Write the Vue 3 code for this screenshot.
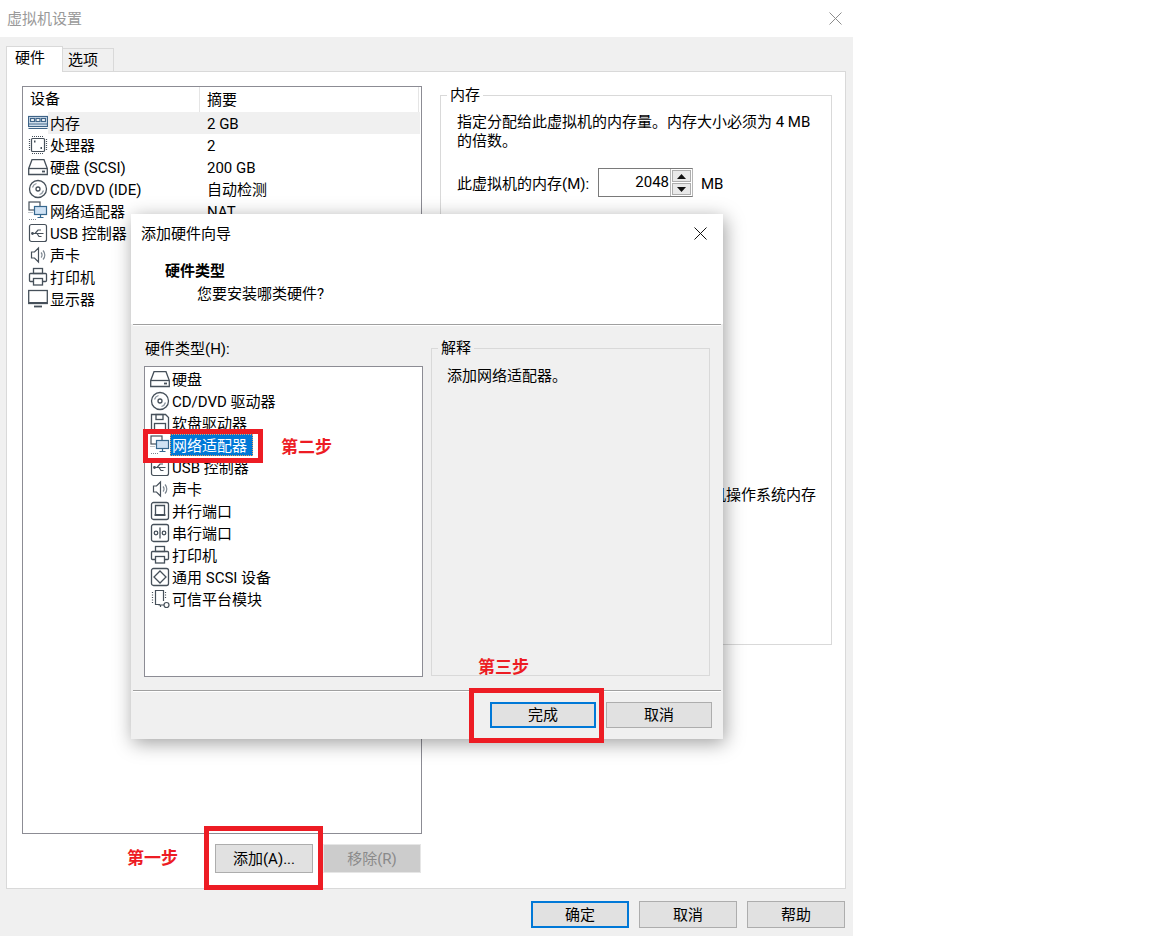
<script setup>
const devices = [
  { icon: 'i-mem', name: '内存', value: '2 GB', selected: true },
  { icon: 'i-cpu', name: '处理器', value: '2' },
  { icon: 'i-hdd', name: '硬盘 (SCSI)', value: '200 GB' },
  { icon: 'i-cd', name: 'CD/DVD (IDE)', value: '自动检测' },
  { icon: 'i-net', name: '网络适配器', value: 'NAT' },
  { icon: 'i-usb', name: 'USB 控制器', value: '' },
  { icon: 'i-snd', name: '声卡', value: '' },
  { icon: 'i-prn', name: '打印机', value: '' },
  { icon: 'i-mon', name: '显示器', value: '' }
]
const hardware = [
  { icon: 'i-hdd', name: '硬盘' },
  { icon: 'i-cd', name: 'CD/DVD 驱动器' },
  { icon: 'i-fdd', name: '软盘驱动器' },
  { icon: 'i-net', name: '网络适配器', selected: true },
  { icon: 'i-usb', name: 'USB 控制器' },
  { icon: 'i-snd', name: '声卡' },
  { icon: 'i-par', name: '并行端口' },
  { icon: 'i-ser', name: '串行端口' },
  { icon: 'i-prn', name: '打印机' },
  { icon: 'i-scsi', name: '通用 SCSI 设备' },
  { icon: 'i-tpm', name: '可信平台模块' }
]
</script>

<template>
  <div class="window">
    <svg class="defs" width="0" height="0" aria-hidden="true">
      <symbol id="i-mem" viewBox="0 0 20 20">
        <g fill="none" stroke="#3f6488" stroke-width="1.2">
          <rect x="0.5" y="3.5" width="19" height="10" fill="#dce8f4" />
          <rect x="2.5" y="5.5" width="4" height="3" fill="#fff" />
          <rect x="8" y="5.5" width="4" height="3" fill="#fff" />
          <rect x="13.5" y="5.5" width="4" height="3" fill="#fff" />
          <path d="M0.5 11H19.5M0.5 15.5H19.5" />
        </g>
      </symbol>
      <symbol id="i-cpu" viewBox="0 0 20 20">
        <g fill="none" stroke="#46505a" stroke-width="1.2">
          <rect x="3.5" y="3.5" width="13" height="13" rx="1" />
          <path stroke-dasharray="1 1" d="M4 1.5H16M4 18.5H16M1.5 4V16M18.5 4V16" />
          <path stroke-width="1.8" d="M6 6.5H7.5M12.5 13H14" />
        </g>
      </symbol>
      <symbol id="i-hdd" viewBox="0 0 20 20">
        <g fill="none" stroke="#46505a" stroke-width="1.3">
          <path d="M0.7 11.5L4 2.7H16L19.3 11.5V17.5H0.7Z" />
          <path d="M0.7 11.5H19.3" />
          <path stroke-width="1.8" d="M14 14.5H17" />
        </g>
      </symbol>
      <symbol id="i-cd" viewBox="0 0 20 20">
        <g fill="none" stroke="#46505a" stroke-width="1.3">
          <circle cx="10" cy="10" r="8.5" />
          <circle cx="10" cy="10" r="2" />
          <path stroke="#8d97a1" d="M4.5 8.5A6 6 0 0 1 8.5 4.5M15.5 11.5A6 6 0 0 1 11.5 15.5" />
        </g>
      </symbol>
      <symbol id="i-net" viewBox="0 0 20 20">
        <g fill="none" stroke="#46505a" stroke-width="1.2">
          <rect x="1" y="1" width="11" height="8" fill="#fff" />
          <rect x="6.5" y="5.5" width="12" height="8" fill="#cfe2f4" stroke="#36688f" />
          <path stroke="#36688f" d="M12.5 13.5V16M9.5 16.5H15.5" />
          <path stroke-dasharray="1 1" stroke="#7b858f" d="M0.5 11.5H5M1 18.5H9" />
        </g>
      </symbol>
      <symbol id="i-usb" viewBox="0 0 20 20">
        <g fill="none" stroke="#46505a" stroke-width="1.2">
          <rect x="1.5" y="1.5" width="17" height="17" rx="2" />
          <path d="M4.5 10.5H15.5M7 10.5L10 7H13M9 10.5L11 13.5H13.5" />
          <circle cx="4.5" cy="10.5" r="0.8" fill="#46505a" />
        </g>
      </symbol>
      <symbol id="i-snd" viewBox="0 0 20 20">
        <g fill="none" stroke="#46505a" stroke-width="1.2">
          <path d="M3.5 7H6.5L10.5 3V17L6.5 13H3.5Z" />
          <path stroke="#7b858f" d="M13 7.5A3.5 3.5 0 0 1 13 12.5M15 5.5A6.5 6.5 0 0 1 15 14.5" />
        </g>
      </symbol>
      <symbol id="i-prn" viewBox="0 0 20 20">
        <g fill="none" stroke="#46505a" stroke-width="1.3">
          <rect x="5.5" y="1.5" width="9" height="5" />
          <rect x="1.5" y="6.5" width="17" height="8" rx="1" />
          <rect x="5.5" y="11.5" width="9" height="6.5" fill="#fff" />
        </g>
      </symbol>
      <symbol id="i-mon" viewBox="0 0 20 20">
        <g fill="none" stroke="#46505a" stroke-width="1.3">
          <rect x="0.7" y="1.5" width="18.6" height="13" />
          <path stroke-width="2" d="M1 14H19" />
          <path stroke-width="1.8" d="M6 17.5H14" />
        </g>
      </symbol>
      <symbol id="i-fdd" viewBox="0 0 20 20">
        <g fill="none" stroke="#46505a" stroke-width="1.3">
          <path d="M1.5 1.5H15.5L18.5 4.5V18.5H1.5Z" />
          <rect x="6" y="1.5" width="7" height="5" />
          <rect x="4.5" y="10.5" width="11" height="8" />
        </g>
      </symbol>
      <symbol id="i-par" viewBox="0 0 20 20">
        <g fill="none" stroke="#46505a" stroke-width="1.3">
          <rect x="1.5" y="1.5" width="17" height="17" rx="2" />
          <path d="M5.5 13V4.5H14.5V13" />
          <path stroke-width="2" d="M4.5 14H15.5" />
        </g>
      </symbol>
      <symbol id="i-ser" viewBox="0 0 20 20">
        <g fill="none" stroke="#46505a" stroke-width="1.3">
          <rect x="1.5" y="1.5" width="17" height="17" rx="2" />
          <circle cx="6" cy="10" r="1.8" />
          <circle cx="14" cy="10" r="1.8" />
          <path d="M10 4.5V15.5" />
        </g>
      </symbol>
      <symbol id="i-scsi" viewBox="0 0 20 20">
        <g fill="none" stroke="#46505a" stroke-width="1.3">
          <rect x="1.5" y="1.5" width="17" height="17" rx="2" />
          <path d="M10 4L16 10L10 16L4 10Z" />
        </g>
      </symbol>
      <symbol id="i-tpm" viewBox="0 0 20 20">
        <g fill="none" stroke="#46505a" stroke-width="1.2">
          <path d="M13.5 12V1.5H5.5V15.5H10" />
          <path stroke-dasharray="1 1.5" d="M2.5 3V14M15.5 3V9" />
          <circle cx="16.5" cy="16" r="2.5" />
          <path d="M14 16H8.5M10.5 16V18" />
        </g>
      </symbol>
    </svg>

    <header class="titlebar">
      <span class="title">虚拟机设置</span>
      <svg class="close close-main" width="13" height="13" viewBox="0 0 13 13">
        <path d="M0.5 0.5L12.5 12.5M12.5 0.5L0.5 12.5" />
      </svg>
    </header>

    <div class="body">
      <div class="tabs">
        <div class="tab active">硬件</div>
        <div class="tab">选项</div>
      </div>

      <section class="panel">
        <div class="left">
          <div class="device-list">
            <div class="device-head">
              <span class="head-a">设备</span>
              <span class="head-b">摘要</span>
            </div>
            <div v-for="d in devices" :key="d.name" class="device-row">
              <svg class="ico"><use :href="'#' + d.icon" /></svg>
              <div class="device-cells" :class="{ sel: d.selected }">
                <span class="device-name">{{ d.name }}</span>
                <span>{{ d.value }}</span>
              </div>
            </div>
          </div>
          <div class="list-actions">
            <button class="btn btn-side">添加(A)...</button>
            <button class="btn btn-side disabled">移除(R)</button>
          </div>
        </div>

        <fieldset class="group mem-group">
          <legend>内存</legend>
          <div class="mem-inner">
            <p class="desc">指定分配给此虚拟机的内存量。内存大小必须为 4 MB<br />的倍数。</p>
            <div class="mem-row">
              <span class="mem-label">此虚拟机的内存(M):</span>
              <div class="spin">
                <span class="spin-value">2048</span>
                <div class="spin-btns">
                  <span class="spin-btn">
                    <svg width="9" height="5" viewBox="0 0 9 5"><path d="M0 5L4.5 0L9 5Z" /></svg>
                  </span>
                  <span class="spin-btn">
                    <svg width="9" height="5" viewBox="0 0 9 5"><path d="M0 0L4.5 5L9 0Z" /></svg>
                  </span>
                </div>
              </div>
              <span class="mem-unit">MB</span>
            </div>
            <p class="hidden-note">机操作系统内存</p>
          </div>
        </fieldset>
      </section>

      <footer class="actions">
        <button class="btn btn-main default">确定</button>
        <button class="btn btn-main">取消</button>
        <button class="btn btn-main">帮助</button>
      </footer>
    </div>

    <div class="dialog">
      <div class="dlg-top">
        <div class="dlg-title">
          <span>添加硬件向导</span>
          <svg class="close close-dlg" width="13" height="13" viewBox="0 0 13 13">
            <path d="M0.5 0.5L12.5 12.5M12.5 0.5L0.5 12.5" />
          </svg>
        </div>
        <div class="dlg-heading">硬件类型</div>
        <div class="dlg-sub">您要安装哪类硬件?</div>
      </div>
      <div class="sep"></div>
      <div class="dlg-main">
        <div class="dlg-col">
          <div class="dlg-label">硬件类型(H):</div>
          <div class="hw-list">
            <div v-for="h in hardware" :key="h.name" class="hw-row">
              <svg class="ico"><use :href="'#' + h.icon" /></svg>
              <span class="hw-name" :class="{ sel: h.selected }">{{ h.name }}</span>
            </div>
          </div>
        </div>
        <fieldset class="group info-group">
          <legend>解释</legend>
          <div class="info-text">添加网络适配器。</div>
        </fieldset>
      </div>
      <div class="sep"></div>
      <div class="dlg-foot">
        <button class="btn btn-dlg default">完成</button>
        <button class="btn btn-dlg">取消</button>
      </div>
    </div>

    <div class="mark mark-add"></div>
    <div class="mark mark-net"></div>
    <div class="mark mark-done"></div>
    <span class="step step-1">第一步</span>
    <span class="step step-2">第二步</span>
    <span class="step step-3">第三步</span>
  </div>
</template>

<style>
html, body { margin: 0; background: #fff; overflow: hidden; }
</style>

<style scoped>
.window {
  position: relative;
  width: 853px;
  height: 936px;
  display: flex;
  flex-direction: column;
  font: 15px/18px Roboto, "Noto Sans CJK SC", sans-serif;
  color: #000;
  overflow: visible;
}
.defs { position: absolute; }
.titlebar {
  height: 37px;
  flex: none;
  display: flex;
  align-items: center;
  justify-content: space-between;
  padding: 0 11px 0 7px;
  background: #fff;
}
.title { color: #9a9a9a; }
.close { fill: none; stroke-width: 1; }
.close-main { stroke: #8c8c8c; }
.close-dlg { stroke: #111; }

.body {
  flex: 1;
  display: flex;
  flex-direction: column;
  background: #f0f0f0;
  padding: 9px 7px 8px 6px;
}
.tabs {
  display: flex;
  align-items: flex-end;
  height: 26px;
  margin-bottom: -1px;
  position: relative;
  z-index: 1;
}
.tab {
  box-sizing: border-box;
  width: 51px;
  height: 23px;
  margin-bottom: 1px;
  padding: 2px 0 0 5px;
  border: 1px solid #d9d9d9;
  border-left: 0;
  border-bottom: 0;
}
.tab.active {
  width: 57px;
  height: 26px;
  margin-bottom: 0;
  padding: 2px 0 0 8px;
  background: #fff;
  border-left: 1px solid #d9d9d9;
}
.panel {
  box-sizing: border-box;
  height: 818px;
  flex: none;
  display: flex;
  gap: 18px;
  padding: 14px 13px 15px 15px;
  background: #fff;
  border: 1px solid #d9d9d9;
}
.left {
  width: 400px;
  flex: none;
  display: flex;
  flex-direction: column;
}
.device-list {
  flex: 1;
  border: 1px solid #8c8c94;
}
.device-head {
  height: 25px;
  display: flex;
  align-items: center;
  margin-right: 2px;
  border-right: 1px solid #e5e5e5;
}
.head-a {
  box-sizing: border-box;
  width: 177px;
  height: 100%;
  padding: 3px 0 0 7px;
  border-right: 1px solid #e5e5e5;
}
.head-b { padding: 0 0 0 7px; }
.device-row {
  height: 22px;
  display: flex;
  padding-left: 5px;
  margin-right: 1px;
}
.ico {
  width: 20px;
  height: 20px;
  flex: none;
  align-self: center;
}
.device-cells {
  flex: 1;
  display: flex;
  align-items: center;
  padding-top: 2px;
  box-sizing: border-box;
}
.device-cells.sel { background: #f0f0f0; }
.device-name {
  box-sizing: border-box;
  width: 159px;
  padding-left: 2px;
}
.list-actions {
  display: flex;
  justify-content: flex-end;
  gap: 10px;
  margin-top: 10px;
  padding-right: 1px;
}
.btn {
  box-sizing: border-box;
  padding: 0;
  font: inherit;
  color: #000;
  background: #e1e1e1;
  border: 1px solid #adadad;
}
.btn.default { border: 2px solid #0078d7; }
.btn-side { width: 98px; height: 29px; }
.btn.disabled {
  background: #cccccc;
  border-color: #e6e6e6;
  color: #8a8a8a;
}
.group {
  margin: 0;
  padding: 0;
  min-width: 0;
  border: 1px solid #d9d9d9;
}
.group legend {
  margin-left: 6px;
  padding: 0 3px;
  line-height: 18px;
}
.mem-group {
  box-sizing: border-box;
  width: 392px;
  height: 559px;
  flex: none;
}
.mem-inner { padding: 9px 15px 0 16px; }
.desc { margin: 0; line-height: 19px; white-space: nowrap; }
.mem-row {
  display: flex;
  align-items: center;
  margin-top: 17px;
  height: 29px;
}
.mem-label { width: 141px; flex: none; white-space: nowrap; padding-top: 2px; }
.spin {
  box-sizing: border-box;
  width: 95px;
  height: 29px;
  display: flex;
  border: 1px solid #7a7a7a;
  border-right-color: #b5b5b5;
}
.spin-value {
  flex: 1;
  text-align: right;
  padding-right: 1px;
  line-height: 26px;
}
.spin-btns {
  width: 22px;
  flex: none;
  box-sizing: border-box;
  display: flex;
  flex-direction: column;
  gap: 1px;
  padding: 1px;
  background: #fff;
  border-left: 1px solid #b5b5b5;
}
.spin-btn {
  flex: 1;
  display: flex;
  align-items: center;
  justify-content: center;
  background: #e9e9e9;
  border: 1px solid #adadad;
}
.spin-btn svg { fill: #111; }
.mem-unit { margin-left: 8px; padding-top: 2px; }
.hidden-note {
  margin: 289px 0 0;
  text-align: right;
  white-space: nowrap;
}
.actions {
  display: flex;
  justify-content: flex-end;
  gap: 10px;
  margin-top: 12px;
  padding-right: 1px;
}
.btn-main { width: 98px; height: 27px; }

.dialog {
  position: absolute;
  left: 131px;
  top: 214px;
  width: 592px;
  height: 525px;
  display: flex;
  flex-direction: column;
  background: #f0f0f0;
  box-shadow: 2px 4px 18px rgba(0, 0, 0, 0.38);
  z-index: 2;
}
.dlg-top {
  height: 110px;
  flex: none;
  background: #fff;
}
.dlg-title {
  box-sizing: border-box;
  height: 38px;
  display: flex;
  align-items: center;
  justify-content: space-between;
  padding: 0 16px 0 10px;
}
.dlg-title span { padding-top: 2px; }
.dlg-heading {
  margin: 10px 0 0 34px;
  font-weight: 700;
}
.dlg-sub { margin: 5px 0 0 66px; }
.sep {
  height: 1px;
  flex: none;
  margin: 0 2px;
  background: #a0a0a0;
  box-shadow: 0 1px 0 #fff;
}
.dlg-main {
  flex: 1;
  min-height: 0;
  display: flex;
  gap: 8px;
  padding: 14px 0 0 13px;
}
.dlg-col { width: 279px; flex: none; }
.dlg-label { padding: 1px 0 0 1px; margin-bottom: 8px; }
.hw-list {
  box-sizing: border-box;
  height: 311px;
  padding-top: 1px;
  background: #fff;
  border: 1px solid #8c8c94;
}
.hw-row {
  height: 22px;
  display: flex;
  align-items: center;
  padding-left: 5px;
}
.hw-name {
  box-sizing: border-box;
  height: 22px;
  padding: 1px 6px 0 2px;
  line-height: 22px;
  white-space: nowrap;
}
.hw-name.sel {
  color: #fff;
  background: #0078d7;
  outline: 1px dotted #f0a060;
  outline-offset: -1px;
}
.info-group {
  box-sizing: border-box;
  width: 279px;
  height: 337px;
  flex: none;
}
.info-text { padding: 10px 0 0 15px; }
.dlg-foot {
  flex: none;
  height: 48px;
  box-sizing: border-box;
  display: flex;
  justify-content: flex-end;
  gap: 10px;
  padding: 11px 11px 0 0;
}
.btn-dlg { width: 106px; height: 26px; }

.mark {
  position: absolute;
  box-sizing: border-box;
  border: 5px solid #ed1c24;
  z-index: 3;
}
.mark-add { left: 204px; top: 826px; width: 119px; height: 64px; }
.mark-net { left: 143px; top: 429px; width: 120px; height: 34px; }
.mark-done { left: 469px; top: 688px; width: 135px; height: 55px; }
.step {
  position: absolute;
  z-index: 3;
  font-size: 17px;
  line-height: 20px;
  font-weight: 700;
  color: #ed1c24;
  white-space: nowrap;
}
.step-1 { left: 127px; top: 848px; }
.step-2 { left: 281px; top: 437px; }
.step-3 { left: 478px; top: 657px; }
</style>
